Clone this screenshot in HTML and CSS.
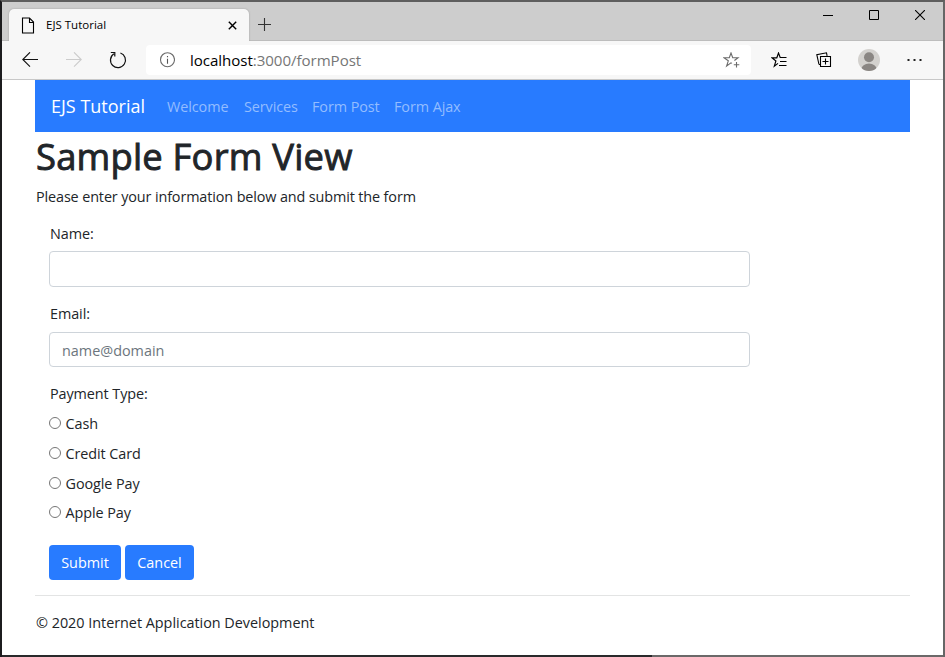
FILE: index.html
```html
<!DOCTYPE html>
<html lang="en">
<head>
<meta charset="utf-8">
<title>EJS Tutorial</title>
<link rel="stylesheet" href="styles.css">
</head>
<body>
<div class="window">
  <header class="titlebar">
    <div class="tab">
      <svg class="tab-icon" width="14" height="17" viewBox="0 0 14 17"><path d="M1.5 1h7l4 4v11h-11zM8.5 1v4.5h4" fill="none" stroke="#000" stroke-width="1.1"/></svg>
      <span class="tab-title">EJS Tutorial</span>
      <svg class="tab-close" width="9" height="9" viewBox="0 0 9 9"><path d="M.8.8l7.4 7.4M8.2.8L.8 8.2" stroke="#000" stroke-width="1.4"/></svg>
    </div>
    <svg class="new-tab" width="13" height="13" viewBox="0 0 13 13"><path d="M6.5 0v13M0 6.5h13" stroke="#333" stroke-width="1.1"/></svg>
    <div class="controls">
      <svg width="10" height="10" viewBox="0 0 10 10"><path d="M0 5.5h10" stroke="#000"/></svg>
      <svg width="10" height="10" viewBox="0 0 10 10"><path d="M.5.5h9v9h-9z" fill="none" stroke="#000"/></svg>
      <svg width="10" height="10" viewBox="0 0 10 10"><path d="M0 0l10 10M10 0L0 10" stroke="#000" stroke-width="1.1"/></svg>
    </div>
  </header>
  <div class="toolbar">
    <div class="nav-icons">
      <svg width="16" height="16" viewBox="0 0 16 16"><path d="M16 7.5H.8M8 .3L.8 7.5 8 14.7" fill="none" stroke="#111" stroke-width="1.1"/></svg>
      <svg width="16" height="16" viewBox="0 0 16 16"><path d="M0 7.5h15.2M8 .3l7.2 7.2L8 14.7" fill="none" stroke="#ccc" stroke-width="1.1"/></svg>
      <svg width="18" height="18" viewBox="0 0 18 18"><path d="M11.4 2A7.5 7.5 0 1 1 4.9 2.8M1.8 1.5h4v4" fill="none" stroke="#111" stroke-width="1.2"/></svg>
    </div>
    <div class="address">
      <svg width="16" height="16" viewBox="0 0 16 16"><circle cx="8.5" cy="7.7" r="7" fill="none" stroke="#6b6b6b" stroke-width="1.1"/><path d="M8.5 6.7v5M8.5 4v1.3" stroke="#555" stroke-width="1.1"/></svg>
      <span class="url"><b>localhost</b>:3000/formPost</span>
      <svg class="star" width="17" height="17" viewBox="0 0 17 17"><path d="M9 11.4L8 10.8l-4.4 3.2 1.7-5.2L1 5.8h5.3L8 1l1.7 4.8H15l-3.6 2.7M13.5 10v5.5M10.8 12.8h5.5" fill="none" stroke="#6b6b6b" stroke-width="1.1"/></svg>
    </div>
    <svg class="fav" width="16" height="16" viewBox="0 0 16 16"><path d="M9.3 5.7L7.5 1 5.8 5.8H1L4.9 9l-1.6 5.2L7 11.4M9 5.5h6.5M9 9.5h6.5M8 13.5h7.5" fill="none" stroke="#000" stroke-width="1.15"/></svg>
    <svg class="coll" width="16" height="16" viewBox="0 0 16 16"><path d="M3 12.5L.8 2.7 10.5.8l.6 3M3 12.5h1.5M4.5 4.5h10v10h-10zM9.5 6.5v6M6.5 9.5h6" fill="none" stroke="#000" stroke-width="1.1"/></svg>
    <svg class="avatar" width="22" height="22" viewBox="0 0 22 22"><defs><clipPath id="face"><circle cx="11" cy="11" r="11"/></clipPath></defs><g clip-path="url(#face)"><path d="M0 0h22v22H0z" fill="#d3d1ce"/><circle cx="11" cy="8.2" r="5" fill="#8a8683"/><ellipse cx="11" cy="20.2" rx="7.6" ry="5.6" fill="#8a8683"/></g></svg>
    <svg class="more" width="15" height="4" viewBox="0 0 15 4"><path d="M.5 1h2v2h-2zM6.5 1h2v2h-2zM12.5 1h2v2h-2z" fill="#222"/></svg>
  </div>
  <main class="page">
    <nav class="navbar">
      <a class="brand">EJS Tutorial</a>
      <a class="link l1">Welcome</a>
      <a class="link l2">Services</a>
      <a class="link l3">Form Post</a>
      <a class="link l4">Form Ajax</a>
    </nav>
    <h1>Sample Form View</h1>
    <p class="lead">Please enter your information below and submit the form</p>
    <form class="form">
      <label class="label first">Name:</label>
      <input class="field" type="text">
      <label class="label">Email:</label>
      <input class="field email" type="text" placeholder="name@domain">
      <label class="label last">Payment Type:</label>
      <label class="option"><i class="radio"></i><span>Cash</span></label>
      <label class="option"><i class="radio"></i><span>Credit Card</span></label>
      <label class="option"><i class="radio"></i><span>Google Pay</span></label>
      <label class="option"><i class="radio"></i><span>Apple Pay</span></label>
      <div class="actions">
        <button type="button" class="btn submit">Submit</button>
        <button type="button" class="btn cancel">Cancel</button>
      </div>
    </form>
    <footer class="footer">© 2020 Internet Application Development</footer>
  </main>
</div>
</body>
</html>
```
FILE: styles.css
```css
* { box-sizing: border-box; }
body {
  margin: 0;
  font-family: "Open Sans", "Noto Sans", sans-serif;
  font-size: 14.4px;
  color: #212529;
  background: #fff;
}
svg { display: block; flex: none; }
.window {
  width: 945px;
  height: 657px;
  display: flex;
  flex-direction: column;
  border: 2px solid #666;
  border-top-color: #5e5e5e;
  border-left-color: #1c1c1e;
  border-bottom: 0;
  overflow: hidden;
  white-space: nowrap;
}
.window::after {
  content: "";
  flex: none;
  height: 2px;
  background: linear-gradient(90deg, #29292b 650px, #6b6969 650px);
}
.titlebar {
  display: flex;
  height: 39px;
  background: #cdcdcd;
  border-bottom: 1px solid #bdbdbd;
  flex: none;
}
.tab {
  display: flex;
  align-items: center;
  width: 240px;
  height: 32px;
  margin: 7px 0 0 7px;
  padding: 0 12px;
  border-radius: 5px 5px 0 0;
  background: #f7f7f7;
  box-shadow: 0 0 2px #999;
}
.tab-title { flex: 1; margin-left: 11px; padding-bottom: 1px; font-size: 11.5px; color: #000; }
.new-tab { margin: 16px 0 0 9px; }
.controls { display: flex; gap: 36px; margin: 8px 18px 0 auto; }
.toolbar {
  display: flex;
  align-items: center;
  height: 39px;
  flex: none;
  background: #f7f7f7;
  border-bottom: 1px solid #c8c8c8;
}
.nav-icons { display: flex; align-items: center; gap: 27.5px; width: 144px; padding-left: 20px; }
.address {
  display: flex;
  align-items: center;
  width: 605px;
  height: 30px;
  padding: 0 11px 0 13px;
  border-radius: 4px;
  background: #fff;
}
.url { flex: 1; margin-left: 15px; font-size: 15.1px; letter-spacing: -.05px; color: #767676; }
.url b { font-weight: 400; color: #000; }
.fav { margin-left: 20px; }
.coll { margin-left: 29px; }
.avatar { margin-left: 26px; }
.more { margin-left: 27px; }
.page { padding: 0 33px; flex: 1; }
.navbar {
  display: flex;
  align-items: center;
  height: 52px;
  padding-left: 16px;
  background: #287bff;
}
.brand { width: 116px; font-size: 18px; color: #fff; }
.link { color: #93bdff; letter-spacing: -.08px; }
.l1 { width: 77px; }
.l2 { width: 68px; }
.l3 { width: 82px; }
h1 {
  margin: 0;
  height: 52px;
  padding-left: 1px;
  font-size: 36.4px;
  line-height: 48px;
  letter-spacing: .2px;
  font-weight: 400;
  -webkit-text-stroke: .9px #212529;
}
.lead { margin: 0; height: 39px; padding-left: 1px; line-height: 26px; letter-spacing: -.12px; }
.form { display: flex; flex-direction: column; width: 715px; padding-left: 14px; letter-spacing: -.08px; }
.label { height: 29px; line-height: 22px; padding-left: 1px; }
.first { height: 28px; }
.last { height: 25.5px; }
.field {
  width: 701px;
  height: 36px;
  margin-bottom: 16px;
  padding: 1px 12px 0;
  border: 1px solid #ced4da;
  border-radius: 4px;
  font: inherit;
}
.email { height: 35px; }
.field::placeholder { color: #6c757d; }
.option { display: flex; align-items: center; gap: 4.5px; height: 29.7px; }
.option span { padding-top: 1px; }
.radio { width: 12px; height: 12px; border: 1px solid #767676; border-radius: 50%; }
.actions { display: flex; gap: 4px; margin: 17.7px 0 15px; }
.btn { height: 35px; border: 0; border-radius: 4px; padding: 1px 0 0; background: #287bff; color: #fff; font: inherit; }
.submit { width: 72px; }
.cancel { width: 69px; }
.footer { border-top: 1px solid #e3e4e4; padding: 16px 0 0 1px; line-height: 22px; letter-spacing: -.02px; }
```
